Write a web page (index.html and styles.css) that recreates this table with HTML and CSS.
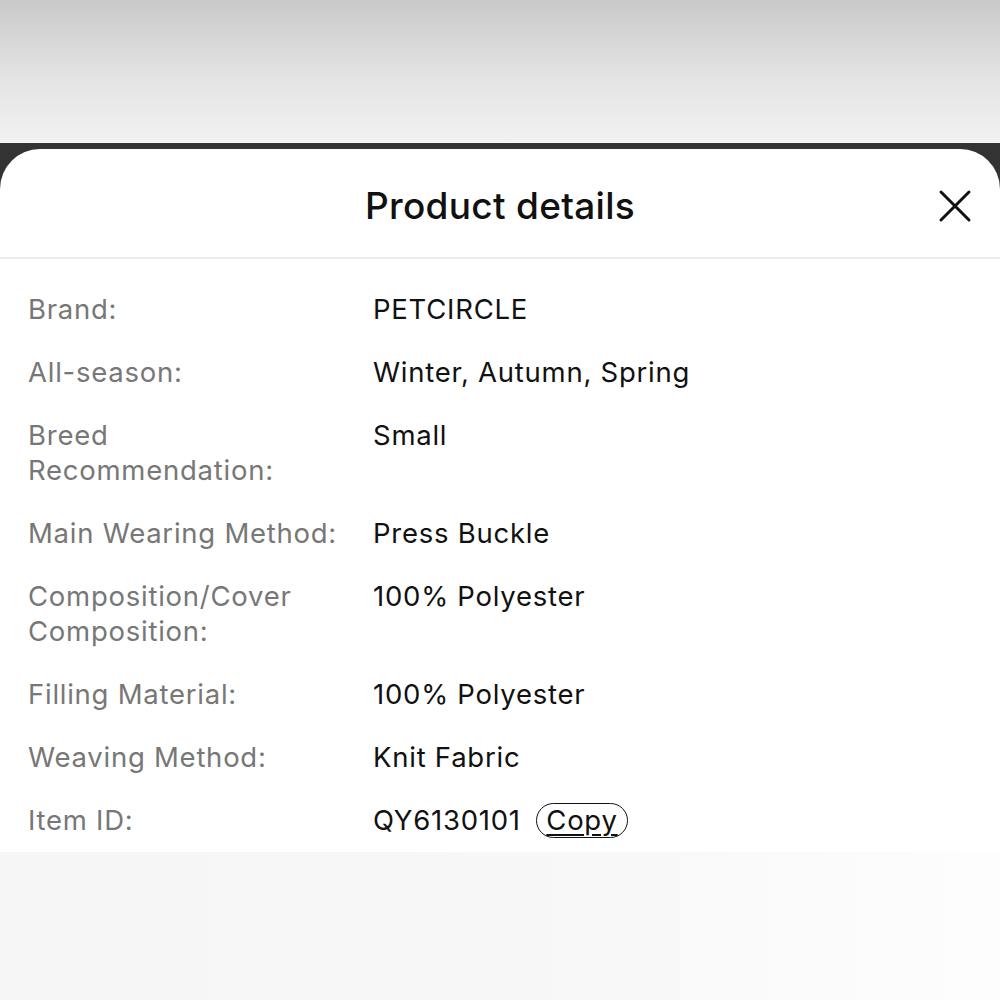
FILE: index.html
```html
<!DOCTYPE html>
<html lang="en">
<head>
    <meta charset="UTF-8">
    <meta name="viewport" content="width=device-width, initial-scale=1.0">
    <title>Product details</title>
    <link rel="stylesheet" href="styles.css">
</head>
<body>
<div class="backdrop"></div>
<div class="sheet-frame">
    <div class="sheet">
        <div class="sheet-header">
            <h1 class="sheet-title">Product details</h1>
            <button class="close-button" aria-label="Close">
                <svg width="34" height="34" viewBox="0 0 34 34">
                    <path d="M3 3 L31 31 M31 3 L3 31" stroke="#111" stroke-width="3" stroke-linecap="round" fill="none"/>
                </svg>
            </button>
        </div>

        <!-- details -->
        <dl class="detail-list">
            <dt class="detail-label">Brand:</dt>
            <dd class="detail-value">PETCIRCLE</dd>

            <dt class="detail-label">All-season:</dt>
            <dd class="detail-value">Winter, Autumn, Spring</dd>

            <dt class="detail-label">Breed Recommendation:</dt>
            <dd class="detail-value">Small</dd>

            <dt class="detail-label">Main Wearing Method:</dt>
            <dd class="detail-value">Press Buckle</dd>

            <dt class="detail-label">Composition/Cover Composition:</dt>
            <dd class="detail-value">100% Polyester</dd>

            <dt class="detail-label">Filling Material:</dt>
            <dd class="detail-value">100% Polyester</dd>

            <dt class="detail-label">Weaving Method:</dt>
            <dd class="detail-value">Knit Fabric</dd>

            <dt class="detail-label">Item ID:</dt>
            <dd class="detail-value">QY6130101 <span class="copy-pill">Copy</span></dd>
        </dl>
    </div>
</div>
<div class="below"></div>
</body>
</html>
```

FILE: styles.css
```css
* { margin: 0; padding: 0; box-sizing: border-box; }
body {
    font-family: Inter, "Liberation Sans", sans-serif;
    background: #f7f7f7;
    width: 1000px;
    height: 1000px;
    overflow: hidden;
}
.backdrop {
    height: 143px;
    background: linear-gradient(180deg, #c9c9c9 0%, #e4e4e4 55%, #f1f1f1 100%);
    border-bottom: 1px solid #fafafa;
}
.sheet-frame {
    background: #333;
    padding-top: 6px;
}
.sheet {
    background: #fff;
    border-radius: 40px 40px 0 0;
    padding-bottom: 14px;
}
.sheet-header {
    height: 110px;
    display: flex;
    align-items: center;
    justify-content: center;
    position: relative;
    border-bottom: 2px solid #ececec;
}
.sheet-title {
    font-size: 37px;
    font-weight: 500;
    color: #111;
    letter-spacing: 0.3px;
    margin-top: 4px;
}
.close-button {
    position: absolute;
    right: 28px;
    top: 40px;
    background: none;
    border: none;
    display: flex;
}
.detail-list {
    display: grid;
    grid-template-columns: 345px 1fr;
    row-gap: 28px;
    padding: 33px 28px 0;
    font-size: 27.5px;
    line-height: 35px;
    letter-spacing: 0.75px;
}
.detail-label {
    color: #777;
    padding-right: 14px;
}
.detail-value {
    color: #111;
}
.copy-pill {
    display: inline-block;
    border: 1.5px solid #111;
    border-radius: 20px;
    padding: 0 9px;
    line-height: 33px;
    margin-left: 7px;
    text-decoration: underline;
    text-underline-offset: 4px;
}
.below {
    height: 160px;
    background: linear-gradient(90deg, #f6f6f6 0%, #f8f8f8 60%, #fdfdfd 100%);
}
```
